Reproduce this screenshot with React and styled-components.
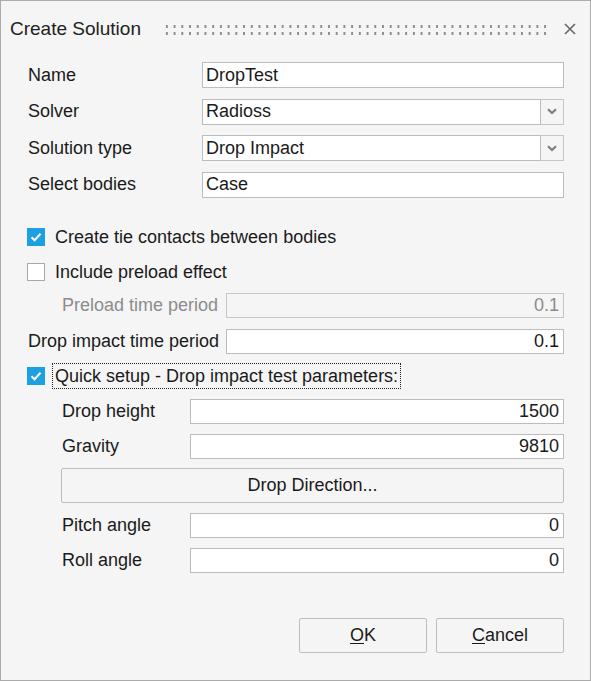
import React from "react";
import styled, { createGlobalStyle } from "styled-components";

const Global = createGlobalStyle`
  html, body { margin: 0; padding: 0; background: #f5f5f5; }
  * { box-sizing: border-box; }
`;

const Window = styled.div`
  width: 591px;
  height: 681px;
  border: 1px solid #ababab;
  background: #f5f5f5;
  font-family: "Liberation Sans", Arial, sans-serif;
  font-size: 18px;
  color: #1a1a1a;
  display: flex;
  flex-direction: column;
`;

const TitleBar = styled.div`
  height: 55px;
  display: flex;
  align-items: center;
  padding: 0 13px 0 9px;
  flex-shrink: 0;
`;

const Title = styled.div`
  font-size: 19px;
  color: #222;
  white-space: nowrap;
`;

const Grip = styled.div`
  flex: 1;
  height: 14px;
  margin: 0 14px 0 22px;
  background-image: radial-gradient(circle, #8e8e8e 1.2px, transparent 1.4px);
  background-size: 7.73px 7px;
  background-position: 0 0;
  background-repeat: repeat;
  transform: translateY(1px);
`;

const Close = styled.button`
  width: 14px;
  height: 14px;
  padding: 0;
  border: 0;
  background: none;
  display: flex;
  align-items: center;
  justify-content: center;
`;

const Body = styled.div`
  flex: 1;
  display: flex;
  flex-direction: column;
  padding: 6px 26px 0 26px;
`;

const Row = styled.div`
  display: flex;
  align-items: center;
  height: ${(p) => p.$h || 26}px;
  margin-top: ${(p) => p.$mt || 0}px;
  padding-left: ${(p) => (p.$indent || 0) + 1}px;
`;

const Label = styled.div`
  width: ${(p) => p.$w}px;
  flex-shrink: 0;
  white-space: nowrap;
  color: ${(p) => (p.$disabled ? "#8c8c8c" : "#1a1a1a")};
`;

const Input = styled.div`
  flex: 1;
  height: 100%;
  border: 1px solid ${(p) => (p.$disabled ? "#c6c6c6" : "#bcbcbc")};
  background: ${(p) => (p.$disabled ? "#f5f5f5" : "#ffffff")};
  color: ${(p) => (p.$disabled ? "#8c8c8c" : "#1a1a1a")};
  display: flex;
  align-items: center;
  justify-content: ${(p) => (p.$right ? "flex-end" : "flex-start")};
  padding: 0 4px 0 3px;
  white-space: nowrap;
`;

const SelectWrap = styled.div`
  flex: 1;
  height: 100%;
  display: flex;
`;

const DropBtn = styled.div`
  width: 23px;
  height: 100%;
  border: 1px solid #c6c6c6;
  border-left: 0;
  background: #f5f5f5;
  display: flex;
  align-items: center;
  justify-content: center;
`;

const CheckBox = styled.div`
  width: 18px;
  height: 18px;
  flex-shrink: 0;
  margin-left: -1px;
  border: 1px solid ${(p) => (p.$checked ? "#1ba0e1" : "#a8a8a8")};
  background: ${(p) => (p.$checked ? "#1ba0e1" : "#ffffff")};
  display: flex;
  align-items: center;
  justify-content: center;
`;

const CheckText = styled.div`
  margin-left: ${(p) => (p.$focus ? 7 : 10)}px;
  padding: 0 ${(p) => (p.$focus ? 3 : 0)}px;
  height: 26px;
  display: flex;
  align-items: center;
  white-space: nowrap;
  outline: ${(p) => (p.$focus ? "1px dotted #222" : "none")};
  outline-offset: -1px;
`;

const WideButton = styled.button`
  flex: 1;
  height: 100%;
  border: 1px solid #bdbdbd;
  border-radius: 2px;
  background: #f5f5f5;
  font: inherit;
  color: #1a1a1a;
`;

const Footer = styled.div`
  display: flex;
  justify-content: flex-end;
  gap: 9px;
  margin-top: 45px;
`;

const DlgButton = styled.button`
  width: 128px;
  height: 35px;
  border: 1px solid #bdbdbd;
  border-radius: 2px;
  background: #f5f5f5;
  font: inherit;
  color: #1a1a1a;
  padding: 0;
  u { text-decoration: underline; text-underline-offset: 2px; }
`;

const Chevron = () => (
  <svg width="10" height="7" viewBox="0 0 10 7">
    <path d="M1 1.2 L5 5 L9 1.2" fill="none" stroke="#7e7e7e" strokeWidth="2.2" />
  </svg>
);

const Tick = () => (
  <svg width="14" height="14" viewBox="0 0 14 14">
    <path d="M2.5 7.2 L5.6 10.2 L11.5 3.8" fill="none" stroke="#ffffff" strokeWidth="2" />
  </svg>
);

function Field({ label, value, w, indent, mt, h, right, disabled }) {
  return (
    <Row $mt={mt} $h={h} $indent={indent}>
      <Label $w={w} $disabled={disabled}>{label}</Label>
      <Input $right={right} $disabled={disabled}>{value}</Input>
    </Row>
  );
}

function SelectField({ label, value, mt }) {
  return (
    <Row $mt={mt}>
      <Label $w={174}>{label}</Label>
      <SelectWrap>
        <Input>{value}</Input>
        <DropBtn><Chevron /></DropBtn>
      </SelectWrap>
    </Row>
  );
}

function Check({ checked, label, mt, focus }) {
  return (
    <Row $mt={mt}>
      <CheckBox $checked={checked}>{checked && <Tick />}</CheckBox>
      <CheckText $focus={focus}>{label}</CheckText>
    </Row>
  );
}

export default function App() {
  return (
    <>
      <Global />
      <Window>
        <TitleBar>
          <Title>Create Solution</Title>
          <Grip />
          <Close aria-label="Close">
            <svg width="12" height="12" viewBox="0 0 12 12">
              <path d="M1 1 L11 11 M11 1 L1 11" stroke="#6a6a6a" strokeWidth="1.7" />
            </svg>
          </Close>
        </TitleBar>
        <Body>
          <Field label="Name" value="DropTest" w={174} />
          <SelectField label="Solver" value="Radioss" mt={10.5} />
          <SelectField label="Solution type" value="Drop Impact" mt={10.5} />
          <Field label="Select bodies" value="Case" w={174} mt={10.5} />
          <Check checked label="Create tie contacts between bodies" mt={26.5} />
          <Check label="Include preload effect" mt={9} />
          <Field label="Preload time period" value="0.1" w={164} indent={34} mt={8} h={25} right disabled />
          <Field label="Drop impact time period" value="0.1" w={198} mt={10.5} h={25} right />
          <Check checked focus label="Quick setup - Drop impact test parameters:" mt={9.5} />
          <Field label="Drop height" value="1500" w={128} indent={34} mt={10} h={25} right />
          <Field label="Gravity" value="9810" w={128} indent={34} mt={10} h={25} right />
          <Row $mt={8.5} $h={35.5} $indent={33}>
            <WideButton>Drop Direction...</WideButton>
          </Row>
          <Field label="Pitch angle" value="0" w={128} indent={34} mt={10} h={25} right />
          <Field label="Roll angle" value="0" w={128} indent={34} mt={10} h={25} right />
          <Footer>
            <DlgButton><u>O</u>K</DlgButton>
            <DlgButton><u>C</u>ancel</DlgButton>
          </Footer>
        </Body>
      </Window>
    </>
  );
}
